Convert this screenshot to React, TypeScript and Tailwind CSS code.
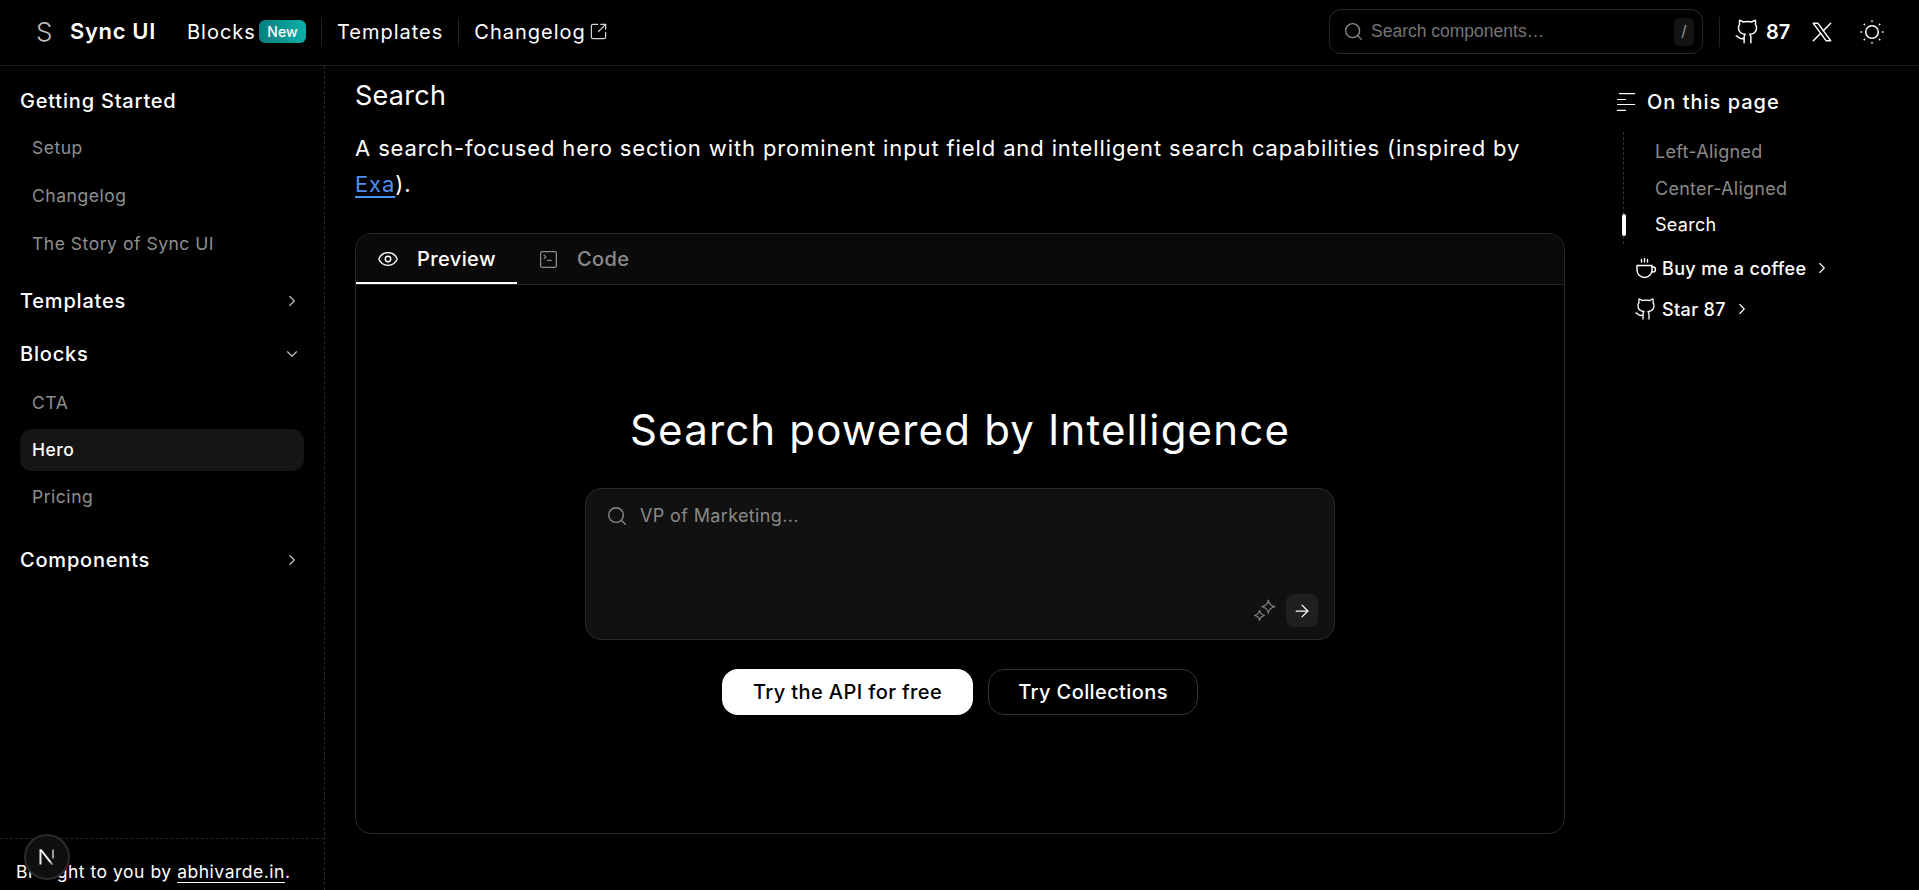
import { Search, Eye, SquareTerminal, SquareArrowOutUpRight, Github, ChevronRight, ChevronDown, ArrowRight } from "lucide-react";

function XLogo({ className }: { className?: string }) {
  return (
    <svg viewBox="0 0 24 24" fill="none" stroke="currentColor" strokeWidth="1.4" strokeLinecap="round" strokeLinejoin="round" className={className}>
      <path d="M4 4l11.733 16h4.267l-11.733 -16z" />
      <path d="M4 20l6.768 -6.768m2.46 -2.46l6.772 -6.772" />
    </svg>
  );
}

function Sun({ className }: { className?: string }) {
  return (
    <svg viewBox="0 0 24 24" fill="none" stroke="currentColor" strokeWidth="1.5" strokeLinecap="round" className={className}>
      <circle cx="12" cy="12" r="6.300" />
      <path d="M12 1v.6M12 22.400v.6M1 12h.6M22.400 12h.6M4.200 4.200l.4.4M19.400 19.400l.4.4M4.200 19.800l.4-.4M19.400 4.600l.4-.4" />
    </svg>
  );
}

function Sparkle({ className }: { className?: string }) {
  return (
    <svg viewBox="0 0 21 21" fill="none" stroke="currentColor" strokeWidth="1.2" strokeLinejoin="round" className={className}>
      <path d="M14 1c.5 3.600 2 5.100 6 6-4 .9-5.500 2.400-6 6-.5-3.600-2-5.100-6-6 4-.9 5.500-2.400 6-6z" />
      <path d="M6 10.500c.4 2.600 1.300 3.600 4.500 4.500-3.200.9-4.100 1.900-4.500 4.500-.4-2.600-1.300-3.600-4.500-4.500 3.200-.9 4.100-1.900 4.500-4.500z" />
    </svg>
  );
}

function TocIcon({ className }: { className?: string }) {
  return (
    <svg viewBox="0 0 18 18" fill="none" stroke="currentColor" strokeWidth="1.200" className={className}>
      <path d="M2 .7h16M0 6.500h9M0 11.500h18M0 17.300h9" />
    </svg>
  );
}

function CoffeeCup({ className }: { className?: string }) {
  return (
    <svg viewBox="0 0 24 24" fill="none" stroke="currentColor" strokeWidth="1.400" strokeLinecap="round" strokeLinejoin="round" className={className}>
      <path d="M3 9.500h15v4.500a7.500 7.500 0 0 1-15 0z" />
      <path d="M18 11h1a2.500 2.500 0 0 1 0 5h-1.300" />
      <path d="M7.500 3.500v2.500M10.500 2.500v3.500M13.500 3.500v2.500" />
    </svg>
  );
}

function NextMark({ className }: { className?: string }) {
  return (
    <svg viewBox="0 0 24 24" className={className}>
      <defs>
        <linearGradient id="nextfade" x1="8" y1="6" x2="19" y2="20" gradientUnits="userSpaceOnUse">
          <stop offset="0" stopColor="#ffffff" />
          <stop offset="0.65" stopColor="#ffffff" />
          <stop offset="1" stopColor="#ffffff" stopOpacity="0.15" />
        </linearGradient>
      </defs>
      <rect x="4.500" y="4.500" width="2" height="15" fill="#e8e8e8" />
      <path d="M4.500 4.500h2.200l12.300 15.500h-2.500z" fill="url(#nextfade)" />
      <rect x="17" y="4.500" width="2" height="9" fill="#9a9a9a" />
    </svg>
  );
}

function SideLink({ label, active }: { label: string; active?: boolean }) {
  return (
    <div className={"h-[42px] flex items-center px-3 rounded-xl text-[17.500px] tracking-[0.03em] " + (active ? "bg-[#151515] text-white font-medium" : "text-[#8f8f8f]")}>
      {label}
    </div>
  );
}

function SideHead({ label, icon }: { label: string; icon?: "right" | "down" }) {
  return (
    <div className="flex items-center justify-between pr-[3px] h-[32px] text-[20px] font-medium text-white tracking-[0.04em]">
      <span>{label}</span>
      {icon === "right" && <ChevronRight className="w-[18px] h-[18px] text-[#c4c4c4]" strokeWidth={1.5} />}
      {icon === "down" && <ChevronDown className="w-[18px] h-[18px] text-[#c4c4c4]" strokeWidth={1.5} />}
    </div>
  );
}

export default function App() {
  return (
    <div className="h-screen overflow-hidden bg-black text-white flex flex-col font-['Inter',sans-serif]">
      <header className="h-[66px] shrink-0 border-b border-[#1f1f1f] flex items-center pl-[36px] pr-[35px] pb-[2px]">
        <span className="text-[26px] font-light text-[#bdbdbd] w-[34px]">S</span>
        <span className="text-[22px] font-semibold w-[117px] tracking-[0.03em]">Sync UI</span>
        <span className="text-[20px] tracking-[0.05em]">Blocks</span>
        <span className="ml-[3px] h-[23px] w-[47px] justify-center rounded-md bg-gradient-to-r from-[#067f80] to-[#0cb0a8] text-[14px] font-medium flex items-center">New</span>
        <div className="w-px h-[28px] bg-[#222] ml-[15px] mr-[15px]" />
        <span className="text-[20px] tracking-[0.05em]">Templates</span>
        <div className="w-px h-[28px] bg-[#222] ml-[15px] mr-[15px]" />
        <span className="text-[20px] tracking-[0.05em]">Changelog</span>
        <SquareArrowOutUpRight className="w-[19px] h-[19px] ml-[3px] text-[#d4d4d4]" strokeWidth={1.5} />
        <div className="flex-1" />
        <div className="w-[374px] h-[45px] rounded-xl border border-[#2a2a2a] flex items-center pl-[13px] pr-[8px]">
          <Search className="w-[21px] h-[21px] text-[#8a8a8a]" strokeWidth={1.5} />
          <span className="ml-[7px] text-[17.500px] text-[#757575] font-['Liberation_Sans',sans-serif]">Search components…</span>
          <div className="flex-1" />
          <span className="w-[20px] h-[28px] rounded-md bg-[#141414] flex items-center justify-center text-[15px] text-[#9a9a9a]">/</span>
        </div>
        <div className="w-px h-[30px] bg-[#222] ml-[16px] mr-[14px]" />
        <Github className="w-[27px] h-[27px]" strokeWidth={1.3} />
        <span className="ml-[5px] text-[20px] font-semibold w-[36px]">87</span>
        <XLogo className="ml-[7px] w-[26px] h-[26px]" />
        <Sun className="ml-[25px] w-[24px] h-[24px]" />
      </header>
      <div className="flex-1 flex min-h-0">
        <aside className="w-[325px] shrink-0 border-r border-dashed border-[#262626] flex flex-col">
          <div className="flex-1 pl-[20px] pr-[20px] pt-[19px] flex flex-col">
            <SideHead label="Getting Started" />
            <div className="mt-[10px] flex flex-col gap-[6px]">
              <SideLink label="Setup" />
              <SideLink label="Changelog" />
              <SideLink label="The Story of Sync UI" />
            </div>
            <div className="mt-[20px]"><SideHead label="Templates" icon="right" /></div>
            <div className="mt-[21px]"><SideHead label="Blocks" icon="down" /></div>
            <div className="mt-[12px] flex flex-col gap-[5px]">
              <SideLink label="CTA" />
              <SideLink label="Hero" active />
              <SideLink label="Pricing" />
            </div>
            <div className="mt-[26px]"><SideHead label="Components" icon="right" /></div>
          </div>
          <div className="h-[52px] border-t border-dashed border-[#262626] pl-[16px] pt-[20px] text-[17.500px] tracking-[0.03em] relative">
            Brought to you by <span className="underline underline-offset-4">abhivarde.in</span>.
            <div className="absolute left-[24px] top-[-5px] w-[46px] h-[46px] rounded-full bg-[#0f0f0f] border-2 border-[#2b2b2b] flex items-center justify-center">
              <NextMark className="w-[24px] h-[24px]" />
            </div>
          </div>
        </aside>
        <main className="w-[1240px] shrink-0 pl-[30px] pt-[14px]">
          <h1 className="text-[27px] leading-[32px] tracking-[0.01em]">Search</h1>
          <p className="mt-[18px] w-[1200px] text-[22px] leading-[36px] tracking-[0.04em]">
            A search-focused hero section with prominent input field and intelligent search capabilities (inspired by <span className="text-[#4b8ff0] underline underline-offset-4">Exa</span>).
          </p>
          <div className="mt-[31px] w-[1210px] h-[601px] rounded-2xl border border-[#2a2a2a] flex flex-col overflow-hidden">
            <div className="h-[51px] shrink-0 bg-[#0a0a0a] border-b border-[#262626] flex text-[20px] tracking-[0.02em]">
              <div className="w-[161px] flex items-center pl-[21px] pt-[1px] gap-[18px] border-b-2 border-white font-medium">
                <Eye className="w-[22px] h-[22px]" strokeWidth={1.5} />
                Preview
              </div>
              <div className="flex items-center pl-[21px] gap-[18px] text-[#8a8a8a] font-medium">
                <SquareTerminal className="w-[21px] h-[21px]" strokeWidth={1.5} />
                Code
              </div>
            </div>
            <div className="flex-1 flex flex-col items-center pt-[121px]">
              <h2 className="text-[42px] leading-[48px] font-normal tracking-[0.028em]">Search powered by Intelligence</h2>
              <div className="mt-[34px] w-[750px] h-[152px] rounded-2xl border border-[#2a2a2a] bg-[#111111] flex flex-col justify-between px-[20px] pt-[13px] pb-[12px]">
                <div className="flex items-center gap-[12px] text-[#8a8a8a] text-[18px] tracking-[0.02em]">
                  <Search className="w-[22px] h-[22px]" strokeWidth={1.5} />
                  VP of Marketing...
                </div>
                <div className="flex justify-end items-center gap-[10px] -mr-[4px]">
                  <Sparkle className="w-[23px] h-[23px] text-[#777]" />
                  <div className="w-[32px] h-[33px] rounded-lg bg-[#1f1f1f] flex items-center justify-center">
                    <ArrowRight className="w-[20px] h-[20px]" strokeWidth={1.5} />
                  </div>
                </div>
              </div>
              <div className="mt-[29px] flex gap-[15px] text-[20px] font-[450] tracking-[0.02em]">
                <div className="w-[251px] h-[46px] rounded-2xl bg-white text-black flex items-center justify-center">Try the API for free</div>
                <div className="w-[210px] h-[46px] rounded-2xl border border-[#333] flex items-center justify-center">Try Collections</div>
              </div>
            </div>
          </div>
        </main>
        <aside className="flex-1 pl-[52px] pt-[20px]">
          <div className="flex items-center gap-[12px] h-[32px] text-[20px] font-medium tracking-[0.05em]">
            <TocIcon className="w-[18px] h-[18px]" />
            On this page
          </div>
          <div className="mt-[14px] ml-[6px] border-l border-dashed border-[#333] flex flex-col py-[1px] relative text-[18px] tracking-[0.015em]">
            <div className="h-[37px] flex items-center pl-[31px] text-[#8a8a8a]">Left-Aligned</div>
            <div className="h-[36px] flex items-center pl-[31px] text-[#8a8a8a]">Center-Aligned</div>
            <div className="h-[37px] flex items-center pl-[31px] text-white">Search</div>
            <div className="absolute left-[-2px] top-[82px] w-[4px] h-[22px] rounded bg-white" />
          </div>
          <div className="mt-[6px] ml-[17px] flex items-center gap-[4px] h-[36px] text-[18px] font-medium tracking-[0.02em]">
            <CoffeeCup className="w-[24px] h-[24px]" />
            Buy me a coffee
            <ChevronRight className="w-[18px] h-[18px] ml-[3px]" strokeWidth={1.5} />
          </div>
          <div className="mt-[5px] ml-[17px] flex items-center gap-[4px] h-[36px] text-[18px] font-medium tracking-[0.02em]">
            <Github className="w-[24px] h-[24px]" strokeWidth={1.3} />
            Star 87
            <ChevronRight className="w-[18px] h-[18px] ml-[3px]" strokeWidth={1.5} />
          </div>
        </aside>
      </div>
    </div>
  );
}
